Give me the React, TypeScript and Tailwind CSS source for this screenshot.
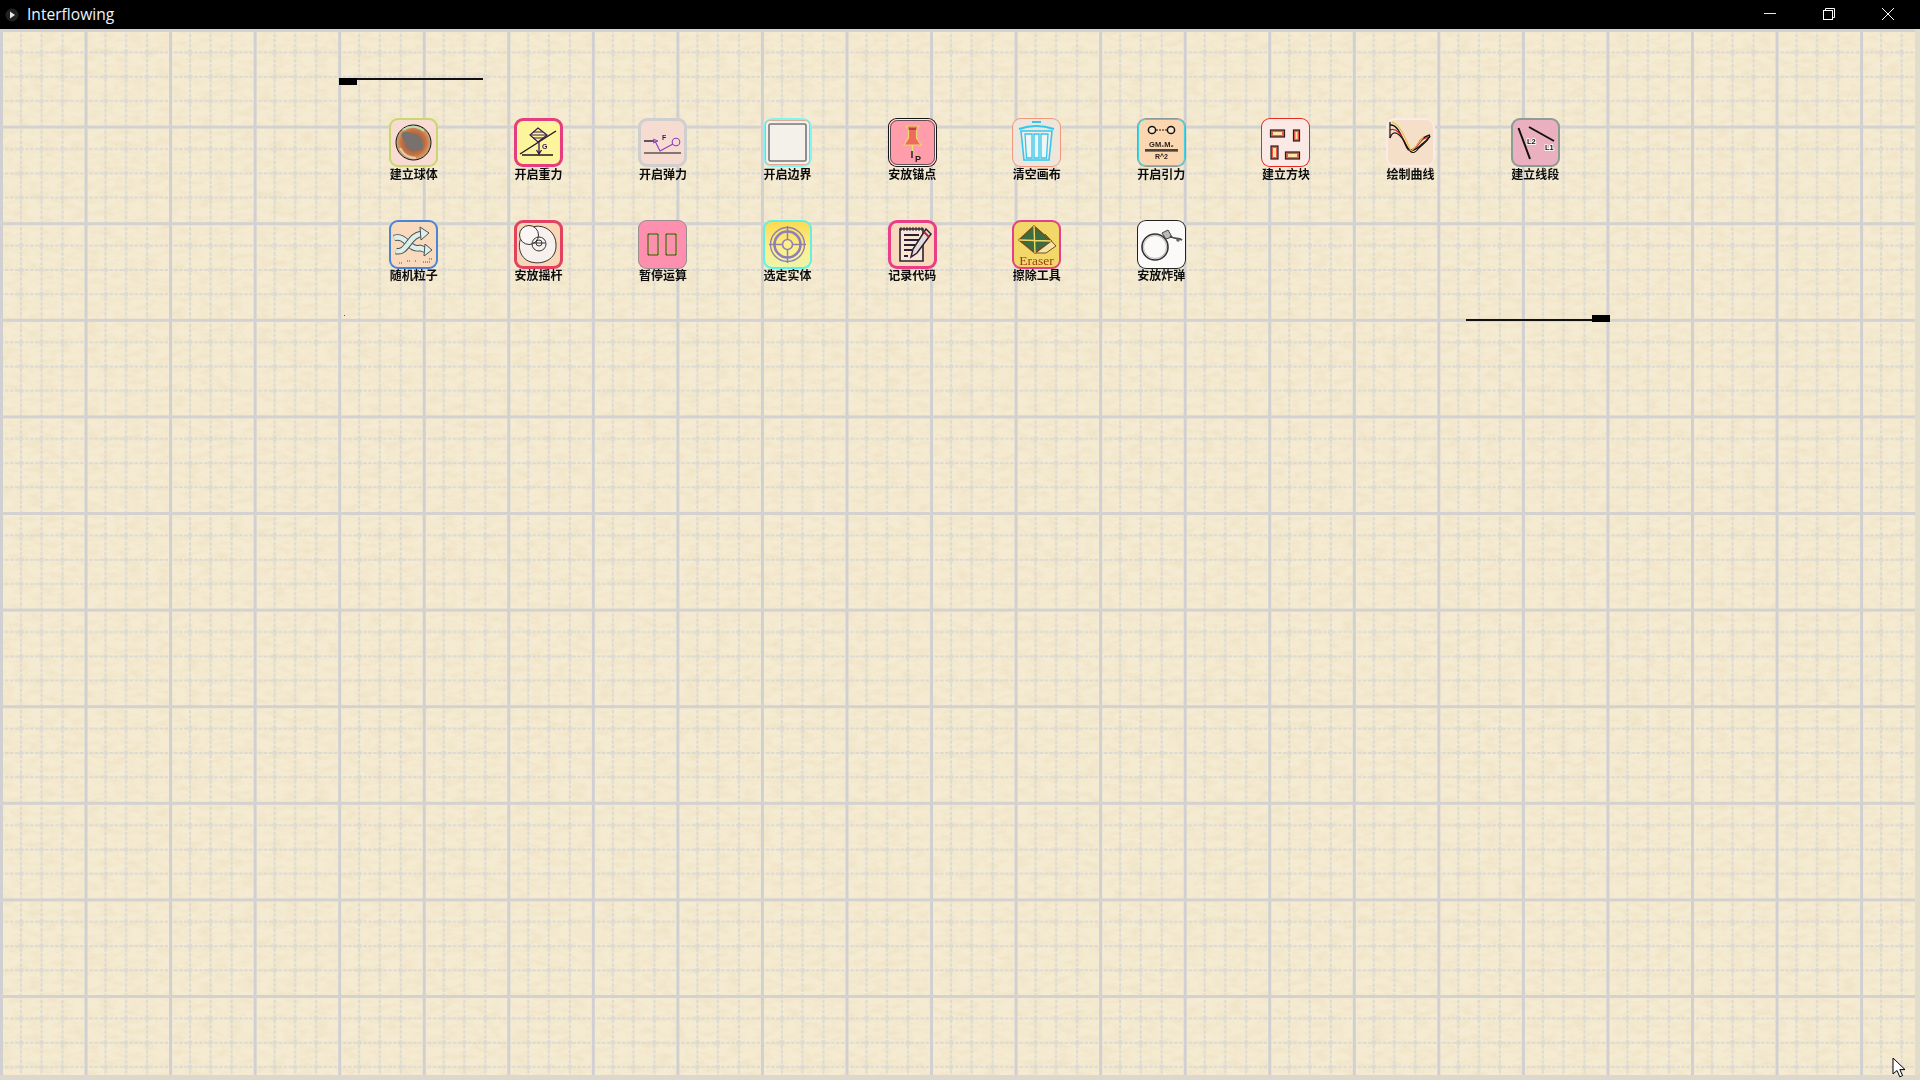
import type { ReactNode } from "react";

const ink = "#1c1420";

function Art({ children }: { children: ReactNode }) {
  return (
    <svg viewBox="0 0 49 49" className="absolute inset-0 h-[49px] w-[49px]">
      {children}
    </svg>
  );
}

const row1 = [
  {
    label: "建立球体",
    tile: "ring-2 ring-inset ring-[#c8d86c] bg-[#f8dcd4]",
    art: (
      <Art>
        <defs>
          <radialGradient id="ball" cx="50%" cy="50%" r="55%">
            <stop offset="0%" stopColor="#7d7a78" />
            <stop offset="40%" stopColor="#8a6a5c" />
            <stop offset="65%" stopColor="#d0703c" />
            <stop offset="85%" stopColor="#c9a070" />
            <stop offset="100%" stopColor="#eadcc8" />
          </radialGradient>
        </defs>
        <circle cx="24.5" cy="24.5" r="17.5" fill="url(#ball)" stroke="#111" strokeWidth="1" />
        <ellipse cx="23.5" cy="23" rx="13" ry="6" transform="rotate(38 23.5 23)" fill="#77716f" />
        <path d="M14 12 Q24 5 35 13" stroke="#b8e0b0" strokeWidth="2" fill="none" />
        <path d="M11 30 Q16 40 27 40" stroke="#e0d0b0" strokeWidth="2" fill="none" />
      </Art>
    ),
  },
  {
    label: "开启重力",
    tile: "ring-[3px] ring-inset ring-[#e63c80] bg-[#fdf59c]",
    art: (
      <Art>
        <path d="M6 36 L42 13" stroke={ink} strokeWidth="1.4" />
        <path d="M8 37 H39" stroke={ink} strokeWidth="1.4" />
        <path d="M24 10 L33 17 L24 24 L16 17 Z" fill="#fdf59c" stroke="#3a1850" strokeWidth="1.2" />
        <path d="M19 14 H29 M17 17 H32 M19 20 H29" stroke="#3a1850" strokeWidth="1" />
        <path d="M25 24 V35 M22.5 32 L25 36 L27.5 32" stroke="#3a1850" strokeWidth="1.3" fill="none" />
        <text x="28" y="31" fontSize="7" fontWeight="700" fill="#3a1850" fontFamily="Liberation Sans">G</text>
      </Art>
    ),
  },
  {
    label: "开启弹力",
    tile: "ring-[3px] ring-inset ring-[#cfcfcf] bg-[#f6dcd0]",
    art: (
      <Art>
        <path d="M6 35 H43" stroke="#111" strokeWidth="1" />
        <path d="M6 23 H17 L22 33 L35 26" stroke="#8a3cc0" strokeWidth="1.1" fill="none" />
        <path d="M6 23 H16" stroke="#111" strokeWidth="1" />
        <path d="M15 21 L20 23 L15 25" stroke="#8a3cc0" strokeWidth="1" fill="none" />
        <circle cx="38" cy="24" r="3.8" fill="none" stroke="#8a3cc0" strokeWidth="1.1" />
        <text x="24" y="22" fontSize="7" fontWeight="700" fill="#3a1850" fontFamily="Liberation Sans">F</text>
      </Art>
    ),
  },
  {
    label: "开启边界",
    tile: "ring-2 ring-inset ring-[#7ff6f6] bg-[#f4f1ea]",
    art: (
      <Art>
        <rect x="2.5" y="2.5" width="44" height="44" rx="4" fill="none" stroke="#e8a890" strokeWidth="1" />
        <rect x="6" y="6" width="37" height="37" rx="1.5" fill="#f4f1ea" stroke="#77777a" strokeWidth="1.6" />
      </Art>
    ),
  },
  {
    label: "安放锚点",
    tile: "ring-1 ring-inset ring-[#161616] bg-[#ff9dab]",
    art: (
      <Art>
        <rect x="1.5" y="1.5" width="46" height="46" rx="8" fill="none" stroke="#f4efe4" strokeWidth="1" />
        <rect x="2.5" y="2.5" width="44" height="44" rx="7" fill="none" stroke="#3a3a3a" strokeWidth="0.8" />
        <path d="M18 8 H31 L28.5 11 V20 L33 27 H16 L20.5 20 V11 Z" fill="#f06a5c" stroke="#e8d870" strokeWidth="1.2" />
        <path d="M20.5 11 H28.5" stroke="#7a1c2c" strokeWidth="1" />
        <path d="M24.5 27 V38" stroke="#e8e070" strokeWidth="1.4" />
        <path d="M24 33 V40" stroke="#30283c" strokeWidth="1.6" />
        <text x="27" y="44" fontSize="9" fontWeight="700" fill="#222" fontFamily="Liberation Sans">P</text>
      </Art>
    ),
  },
  {
    label: "清空画布",
    tile: "ring-1 ring-inset ring-[#f0987c] bg-[#ece6dd]",
    art: (
      <Art>
        <path d="M20 4 H29 M7 11 Q24 5 42 11" stroke="#35c6ee" strokeWidth="2" fill="none" />
        <path d="M9 13 H40 L37 42 H12 Z" fill="#f3efe8" stroke="#35c6ee" strokeWidth="1.6" />
        <path d="M13 16 L14.5 40 H20 V16 Z M22 16 V40 H27 V16 Z M29 16 V40 H34.5 L36 16 Z" fill="#eef6f6" stroke="#35c6ee" strokeWidth="1.3" />
      </Art>
    ),
  },
  {
    label: "开启引力",
    tile: "ring-1 ring-inset ring-[#8d9a9a] bg-[#fad7b0]",
    art: (
      <Art>
        <rect x="1.5" y="1.5" width="46" height="46" rx="7" fill="none" stroke="#3ed4e4" strokeWidth="1.2" />
        <circle cx="15" cy="12" r="3.6" fill="#fbe6c8" stroke="#111" strokeWidth="1.5" />
        <circle cx="34" cy="12" r="3.6" fill="#fbe6c8" stroke="#111" strokeWidth="1.5" />
        <path d="M19 12 H30" stroke="#111" strokeWidth="1" strokeDasharray="2 1" />
        <text x="24.5" y="29" textAnchor="middle" fontSize="7.5" fontWeight="700" fill="#2a1c18" fontFamily="Liberation Sans">GM₁M₂</text>
        <path d="M8 32 H41" stroke="#111" strokeWidth="1.4" />
        <path d="M8 33.5 H41" stroke="#c22020" strokeWidth="0.7" />
        <text x="24.5" y="41" textAnchor="middle" fontSize="7" fontWeight="700" fill="#2a1c18" fontFamily="Liberation Sans">R^2</text>
      </Art>
    ),
  },
  {
    label: "建立方块",
    tile: "ring-1 ring-inset ring-[#e62a20] bg-[#fbe9e6]",
    art: (
      <Art>
        <rect x="9.5" y="12" width="14" height="7" fill="#f25a4c" stroke="#222" strokeWidth="1.2" />
        <rect x="12" y="14" width="9" height="3" fill="#fbe9a8" />
        <rect x="32.5" y="12" width="6" height="11" fill="#f25a4c" stroke="#222" strokeWidth="1.2" />
        <rect x="34.5" y="14" width="2" height="7" fill="#fbe9a8" />
        <rect x="10" y="28" width="7" height="13" fill="#f25a4c" stroke="#222" strokeWidth="1.2" />
        <rect x="12" y="30" width="3" height="9" fill="#fbe9a8" />
        <rect x="24.5" y="34" width="14" height="7" fill="#f25a4c" stroke="#222" strokeWidth="1.2" />
        <rect x="27" y="36" width="9" height="3" fill="#fbe9a8" />
      </Art>
    ),
  },
  {
    label: "绘制曲线",
    tile: "ring-2 ring-inset ring-[#faeae8] bg-[#f5dfc8]",
    art: (
      <Art>
        <path d="M4 7 C12 6 16 20 21 30 C24 36 30 30 34 23 C37 19 41 18 44 17" stroke="#111" strokeWidth="1.4" fill="none" />
        <path d="M4 12 C13 8 18 24 23 32 C27 36 32 26 36 22 C39 19 42 20 44 19" stroke="#d02030" strokeWidth="1.2" fill="none" />
        <path d="M4 20 C8 8 17 20 20 27 C24 36 30 32 36 26 C39 23 42 22 44 18" stroke="#111" strokeWidth="1.2" fill="none" />
        <path d="M6 4 C14 6 20 22 25 33 C29 30 33 24 38 18" stroke="#e8c040" strokeWidth="1.2" fill="none" />
        <path d="M4 4 V20 M24 33 C27 36 30 34 32 31 C36 26 40 26 44 18" stroke="#111" strokeWidth="1.2" fill="none" />
      </Art>
    ),
  },
  {
    label: "建立线段",
    tile: "ring-2 ring-inset ring-[#8f9c94] bg-[#ebb0c0]",
    art: (
      <Art>
        <path d="M7.5 10 L19 41" stroke="#111" strokeWidth="2" />
        <path d="M18 9 L43 23" stroke="#111" strokeWidth="2" />
        <text x="16" y="26" fontSize="7.5" fontWeight="700" fill="#111" stroke="#fff" strokeWidth="1.6" paintOrder="stroke" fontFamily="Liberation Sans">L2</text>
        <text x="34" y="32" fontSize="7.5" fontWeight="700" fill="#111" stroke="#fff" strokeWidth="1.6" paintOrder="stroke" fontFamily="Liberation Sans">L1</text>
      </Art>
    ),
  },
];

const row2 = [
  {
    label: "随机粒子",
    tile: "ring-2 ring-inset ring-[#4a84d6] bg-[#f9dabc]",
    art: (
      <Art>
        <path d="M5 18 C17 14 20 31 31 28 L37 30" stroke="#4a4f55" strokeWidth="6.5" fill="none" />
        <path d="M5 18 C17 14 20 31 31 28 L37 30" stroke="#dcefe8" strokeWidth="4.6" fill="none" />
        <path d="M7 31 C18 34 20 15 32 14" stroke="#4a4f55" strokeWidth="6.5" fill="none" />
        <path d="M7 31 C18 34 20 15 32 14" stroke="#dcefe8" strokeWidth="4.6" fill="none" />
        <path d="M31 7 L40 13 L32 20 Z M36 24 L43 30 L35 36 Z" fill="#dcefe8" stroke="#4a4f55" strokeWidth="1" />
        <path d="M10 43 h3 M18 41 h3 M26 41 h2 M34 42 h3 M40 39 h3 M38 42 h3" stroke="#5a4a3c" strokeWidth="1" strokeDasharray="1 1" />
      </Art>
    ),
  },
  {
    label: "安放摇杆",
    tile: "ring-[3px] ring-inset ring-[#e2425f] bg-[#f8d6b6]",
    art: (
      <Art>
        <path d="M11 12 C20 1 41 6 42 24 C43 40 28 45 17 42 C5 39 1 22 11 12 Z" fill="#f7f1ee" stroke="#333" strokeWidth="1" />
        <circle cx="15" cy="15" r="9.5" fill="#fbf6f4" stroke="#333" strokeWidth="1" />
        <circle cx="25" cy="24" r="7" fill="none" stroke="#333" strokeWidth="1" />
        <circle cx="25" cy="23" r="3" fill="none" stroke="#333" strokeWidth="1" />
        <path d="M19 23 H31" stroke="#333" strokeWidth="1" />
      </Art>
    ),
  },
  {
    label: "暂停运算",
    tile: "ring-1 ring-inset ring-[#9a8f90] bg-[#ff8fae]",
    art: (
      <Art>
        <rect x="10" y="14" width="10" height="21" fill="#ff8fae" stroke="#fff37a" strokeWidth="2" />
        <rect x="10" y="14" width="10" height="21" fill="none" stroke="#111" strokeWidth="1" />
        <rect x="28" y="14" width="10" height="21" fill="#ff8fae" stroke="#fff37a" strokeWidth="2" />
        <rect x="28" y="14" width="10" height="21" fill="none" stroke="#111" strokeWidth="1" />
      </Art>
    ),
  },
  {
    label: "选定实体",
    tile: "ring-2 ring-inset ring-[#62f0e4] bg-[linear-gradient(180deg,#fcd94e,#fdf08c_60%,#e8f6b0)]",
    art: (
      <Art>
        <circle cx="24.5" cy="24.5" r="17" fill="none" stroke="#8f7fb4" strokeWidth="1.4" />
        <circle cx="24.5" cy="24.5" r="13" fill="none" stroke="#8f7fb4" strokeWidth="2.6" />
        <circle cx="24.5" cy="24.5" r="5" fill="#fdf08c" stroke="#8f7fb4" strokeWidth="1.6" />
        <path d="M24.5 6 V19 M24.5 30 V43 M6 24.5 H19 M30 24.5 H43" stroke="#8f7fb4" strokeWidth="1.5" />
      </Art>
    ),
  },
  {
    label: "记录代码",
    tile: "ring-[3px] ring-inset ring-[#ea3f86] bg-[#f9d9bc]",
    art: (
      <Art>
        <path d="M12 9 H35 V41 H12 Z" fill="#f9e6d4" stroke="#2a2230" strokeWidth="1.6" />
        <path d="M13 7 V11 M16 7 V11 M19 7 V11 M22 7 V11 M25 7 V11 M28 7 V11 M31 7 V11 M34 7 V11" stroke="#2a2230" strokeWidth="1" />
        <path d="M16 15 H31 M16 20 H31 M16 25 H28 M16 30 H24 M16 36 H20" stroke="#2a2230" strokeWidth="1.8" />
        <path d="M38 9 L43 14 L29 33 L23 37 L25 29 Z" fill="#e4dcd8" stroke="#2a2230" strokeWidth="1.5" />
        <path d="M36 12 L41 17" stroke="#c0203c" strokeWidth="2" />
      </Art>
    ),
  },
  {
    label: "擦除工具",
    tile: "ring-2 ring-inset ring-[#e2408c] bg-[#f2d868]",
    art: (
      <Art>
        <path d="M33 14 L44 26 L34 33 L24 33" fill="#f2e4a8" stroke="#7a4a18" strokeWidth="1" />
        <path d="M22 6 L39 21 L23 33 L7 20 Z" fill="#3c6c40" stroke="#7a4a18" strokeWidth="1.5" />
        <path d="M22 6 L23 33 M7 20 L39 21" stroke="#f2d868" strokeWidth="1.4" />
        <text x="24.5" y="45" textAnchor="middle" fontSize="13.5" fontWeight="400" fill="#a03c18" fontFamily="Liberation Serif">Eraser</text>
      </Art>
    ),
  },
  {
    label: "安放炸弹",
    tile: "ring-1 ring-inset ring-[#222] bg-[#fbfaf8]",
    art: (
      <Art>
        <circle cx="18" cy="27" r="13" fill="#fbfaf8" stroke="#333" strokeWidth="1.6" />
        <circle cx="18" cy="27" r="11.5" fill="none" stroke="#aaa" strokeWidth="0.8" />
        <path d="M25 13 L31 10 L35 17 L29 19 Z" fill="#bbb" stroke="#444" strokeWidth="1" />
        <path d="M33 16 C37 20 41 17 45 20" stroke="#444" strokeWidth="1.6" fill="none" />
        <circle cx="41" cy="20" r="1.8" fill="#666" />
      </Art>
    ),
  },
];

function Tool({ label, tile, art, tight }: { label: string; tile: string; art: ReactNode; tight?: boolean }) {
  return (
    <div className="flex flex-col items-center blur-[0.3px]">
      <div className={`relative h-[49px] w-[49px] overflow-hidden rounded-[9px] ${tile}`}>{art}</div>
      <span className={`h-[14px] whitespace-nowrap text-[12px] leading-[14px] font-bold text-[#0c0c0c] ${tight ? "-mt-[1px]" : ""}`}>
        {label}
      </span>
    </div>
  );
}

function GridPaper() {
  return (
    <svg className="absolute inset-0 h-full w-full" xmlns="http://www.w3.org/2000/svg">
      <defs>
        <filter id="grain" x="0" y="0" width="100%" height="100%">
          <feTurbulence type="fractalNoise" baseFrequency="0.07 0.16" numOctaves="3" seed="4" />
          <feColorMatrix values="0 0 0 0 0.78  0 0 0 0 0.66  0 0 0 0 0.42  1.6 0 0 0 -0.62" />
        </filter>
        <pattern id="cell" width="84.55" height="96.6" patternUnits="userSpaceOnUse">
          <g stroke="#dcd9d2" strokeWidth="2" strokeDasharray="3.5 1.5" fill="none">
            <path d="M21 0 V96.6 M41.5 0 V96.6 M62.5 0 V96.6" />
            <path d="M0 23.5 H84.55 M0 47.8 H84.55 M0 72 H84.55" />
          </g>
          <g fill="none" stroke="#dcd9d2" strokeWidth="1">
            <circle cx="21" cy="23.5" r="2" />
            <circle cx="41.5" cy="23.5" r="2" />
            <circle cx="62.5" cy="23.5" r="2" />
            <circle cx="21" cy="47.8" r="2" />
            <circle cx="41.5" cy="47.8" r="2" />
            <circle cx="62.5" cy="47.8" r="2" />
            <circle cx="21" cy="72" r="2" />
            <circle cx="41.5" cy="72" r="2" />
            <circle cx="62.5" cy="72" r="2" />
          </g>
          <rect x="0" y="0" width="3" height="96.6" fill="#d0d0d2" />
          <rect x="0" y="0" width="84.55" height="3" fill="#d3d2d0" />
        </pattern>
      </defs>
      <rect width="100%" height="100%" filter="url(#grain)" opacity="0.42" />
      <rect width="100%" height="100%" fill="url(#cell)" />
    </svg>
  );
}

function CornerMark({ flip }: { flip?: boolean }) {
  return (
    <div className={`flex ${flip ? "flex-row-reverse items-end" : "items-start"}`}>
      <div className="h-[7px] w-[18px] bg-black" />
      <div className={`h-[2px] w-[126px] bg-[#111] ${flip ? "mb-[1px]" : ""}`} />
    </div>
  );
}

export default function App() {
  return (
    <div className="flex h-[1080px] w-[1920px] flex-col overflow-hidden bg-black font-['Noto_Sans_CJK_SC',sans-serif]">
      <header className="flex h-[29px] shrink-0 items-center bg-black text-white">
        <div className="flex w-[27px] justify-center pr-[4px]">
          <svg width="14" height="14" viewBox="0 0 14 14">
            <circle cx="7" cy="7" r="6.5" fill="#222" />
            <path d="M5 3.5 L10 7 L5 10.5 Z" fill="#e8e8e8" />
          </svg>
        </div>
        <span className="font-['Open_Sans',sans-serif] text-[15.6px] leading-none text-[#eaf4ff]">Interflowing</span>
        <div className="mr-[2.5px] ml-auto flex items-start self-start pt-[8px]">
          <div className="flex w-[59px] justify-center">
            <svg width="12" height="12" viewBox="0 0 12 12"><path d="M0 5.5 H12" stroke="#e8e8e8" strokeWidth="1" /></svg>
          </div>
          <div className="flex w-[59px] justify-center">
            <svg width="12" height="12" viewBox="0 0 12 12" fill="none" stroke="#fff" strokeWidth="1">
              <rect x="0.5" y="2.5" width="9" height="9" />
              <path d="M2.5 2.5 V0.5 H11.5 V9.5 H9.5" />
            </svg>
          </div>
          <div className="flex w-[59px] justify-center">
            <svg width="12" height="12" viewBox="0 0 12 12" stroke="#fff" strokeWidth="1"><path d="M0 0 L12 12 M12 0 L0 12" /></svg>
          </div>
        </div>
      </header>

      <main className="relative flex-1 overflow-hidden bg-[#f5ebd2]">
        <GridPaper />
        <div className="absolute top-0 right-0 h-full w-[5px] bg-[#e2dccb]" />
        <div className="absolute bottom-0 left-0 h-[5px] w-full bg-[#dcd8cc]" />

        <div className="relative ml-[339px] flex w-[1271px] flex-col pt-[49px]">
          <CornerMark />
          <div className="mt-[33px] ml-[12.5px] grid grid-cols-[repeat(10,124.6px)] justify-items-center gap-y-[39px]">
            {row1.map((t) => (
              <Tool key={t.label} {...t} />
            ))}
            {row2.map((t) => (
              <Tool key={t.label} {...t} tight />
            ))}
          </div>
          <div className="mt-[33px] flex justify-start">
            <div className="ml-[1127px]">
              <CornerMark flip />
            </div>
          </div>
        </div>

        {/* tiny speck left on the canvas */}
        <div className="absolute top-[286px] left-[344px] h-px w-px bg-[#555]" />

        {/* mouse pointer */}
        <svg className="absolute top-[1028px] left-[1892px]" width="15" height="21" viewBox="0 0 15 21">
          <path d="M1 1 V17 L5 13.5 L7.8 19.8 L10.6 18.6 L7.8 12.6 H13 Z" fill="#fff" stroke="#000" strokeWidth="1" />
        </svg>
      </main>
    </div>
  );
}
